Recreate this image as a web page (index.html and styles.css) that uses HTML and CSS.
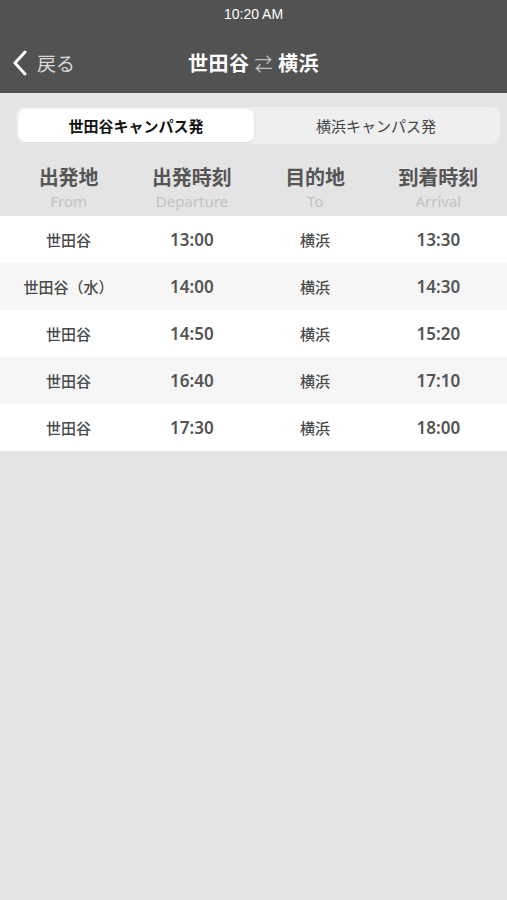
FILE: index.html
```html
<!DOCTYPE html>
<html lang="ja">
<head>
    <meta charset="UTF-8">
    <meta name="viewport" content="width=device-width, initial-scale=1.0">
    <title>時刻表</title>
    <link rel="stylesheet" href="styles.css">
</head>
<body>
    <header class="top">
        <div class="status">10:20 AM</div>
        <nav class="nav">
            <a class="back" href="#">
                <svg width="16" height="26" viewBox="0 0 16 26"><path d="M13 2 L3 13 L13 24" fill="none" stroke="#fff" stroke-width="3" stroke-linecap="round" stroke-linejoin="round"/></svg>
                <span>戻る</span>
            </a>
            <h1 class="title">世田谷 <span class="swap">⇄</span> 横浜</h1>
        </nav>
    </header>

    <div class="tabs">
        <button class="tab active">世田谷キャンパス発</button>
        <button class="tab">横浜キャンパス発</button>
    </div>

    <div class="thead">
        <div class="th"><b>出発地</b><span>From</span></div>
        <div class="th"><b>出発時刻</b><span>Departure</span></div>
        <div class="th"><b>目的地</b><span>To</span></div>
        <div class="th"><b>到着時刻</b><span>Arrival</span></div>
    </div>

    <div class="rows">
        <div class="row"><div>世田谷</div><div class="time">13:00</div><div>横浜</div><div class="time">13:30</div></div>
        <div class="row"><div>世田谷（水）</div><div class="time">14:00</div><div>横浜</div><div class="time">14:30</div></div>
        <div class="row"><div>世田谷</div><div class="time">14:50</div><div>横浜</div><div class="time">15:20</div></div>
        <div class="row"><div>世田谷</div><div class="time">16:40</div><div>横浜</div><div class="time">17:10</div></div>
        <div class="row"><div>世田谷</div><div class="time">17:30</div><div>横浜</div><div class="time">18:00</div></div>
    </div>
</body>
</html>
```

FILE: styles.css
```css
body {
    margin: 0;
    background-color: #e4e4e4;
    font-family: "Noto Sans CJK JP", "Noto Sans", sans-serif;
    color: #4a4a4a;
}
.top {
    background-color: #525252;
    color: #fff;
}
.status {
    height: 28px;
    line-height: 28px;
    text-align: center;
    font-size: 14px;
    font-family: "Liberation Sans", "Noto Sans CJK JP", sans-serif;
}
.nav {
    position: relative;
    height: 65px;
    display: flex;
    align-items: center;
    justify-content: center;
    padding-top: 3px;
    box-sizing: border-box;
}
.back {
    position: absolute;
    left: 12px;
    top: 21px;
    display: flex;
    align-items: center;
    gap: 9px;
    color: #d8d8d8;
    text-decoration: none;
    font-size: 19px;
}
.title {
    margin: 0;
    font-size: 20px;
    font-weight: bold;
    letter-spacing: 0.5px;
}
.swap {
    color: #bdbdbd;
    font-weight: normal;
    font-size: 18px;
}
.tabs {
    display: flex;
    margin: 14px 7px 0 16px;
    padding: 2px;
    background-color: #efefef;
    border-radius: 9px;
}
.tab {
    flex: 1;
    height: 33px;
    border: none;
    background: none;
    border-radius: 7px;
    font-family: inherit;
    font-size: 15px;
    color: #444;
    padding: 0;
}
.tab.active {
    flex: 0 0 236px;
    background-color: #fff;
    color: #111;
    font-weight: bold;
    box-shadow: 0 1px 2px rgba(0, 0, 0, 0.12);
}
.thead, .row {
    display: grid;
    grid-template-columns: repeat(4, 1fr);
    padding: 0 7px;
    text-align: center;
}
.thead {
    height: 72px;
    padding-top: 20px;
    box-sizing: border-box;
}
.th b {
    display: block;
    font-size: 20px;
    line-height: 26px;
    font-weight: 700;
    color: #555;
}
.th span {
    display: block;
    font-size: 15px;
    line-height: 22px;
    color: #c2c2c2;
    font-family: "Noto Sans", sans-serif;
}
.row {
    height: 47px;
    align-items: center;
    font-size: 15px;
    font-weight: 500;
    background-color: #fff;
}
.row:nth-child(even) {
    background-color: #f6f6f6;
}
.time {
    font-size: 17px;
    font-weight: 600;
    font-family: "Noto Sans", sans-serif;
    color: #555;
}
```
